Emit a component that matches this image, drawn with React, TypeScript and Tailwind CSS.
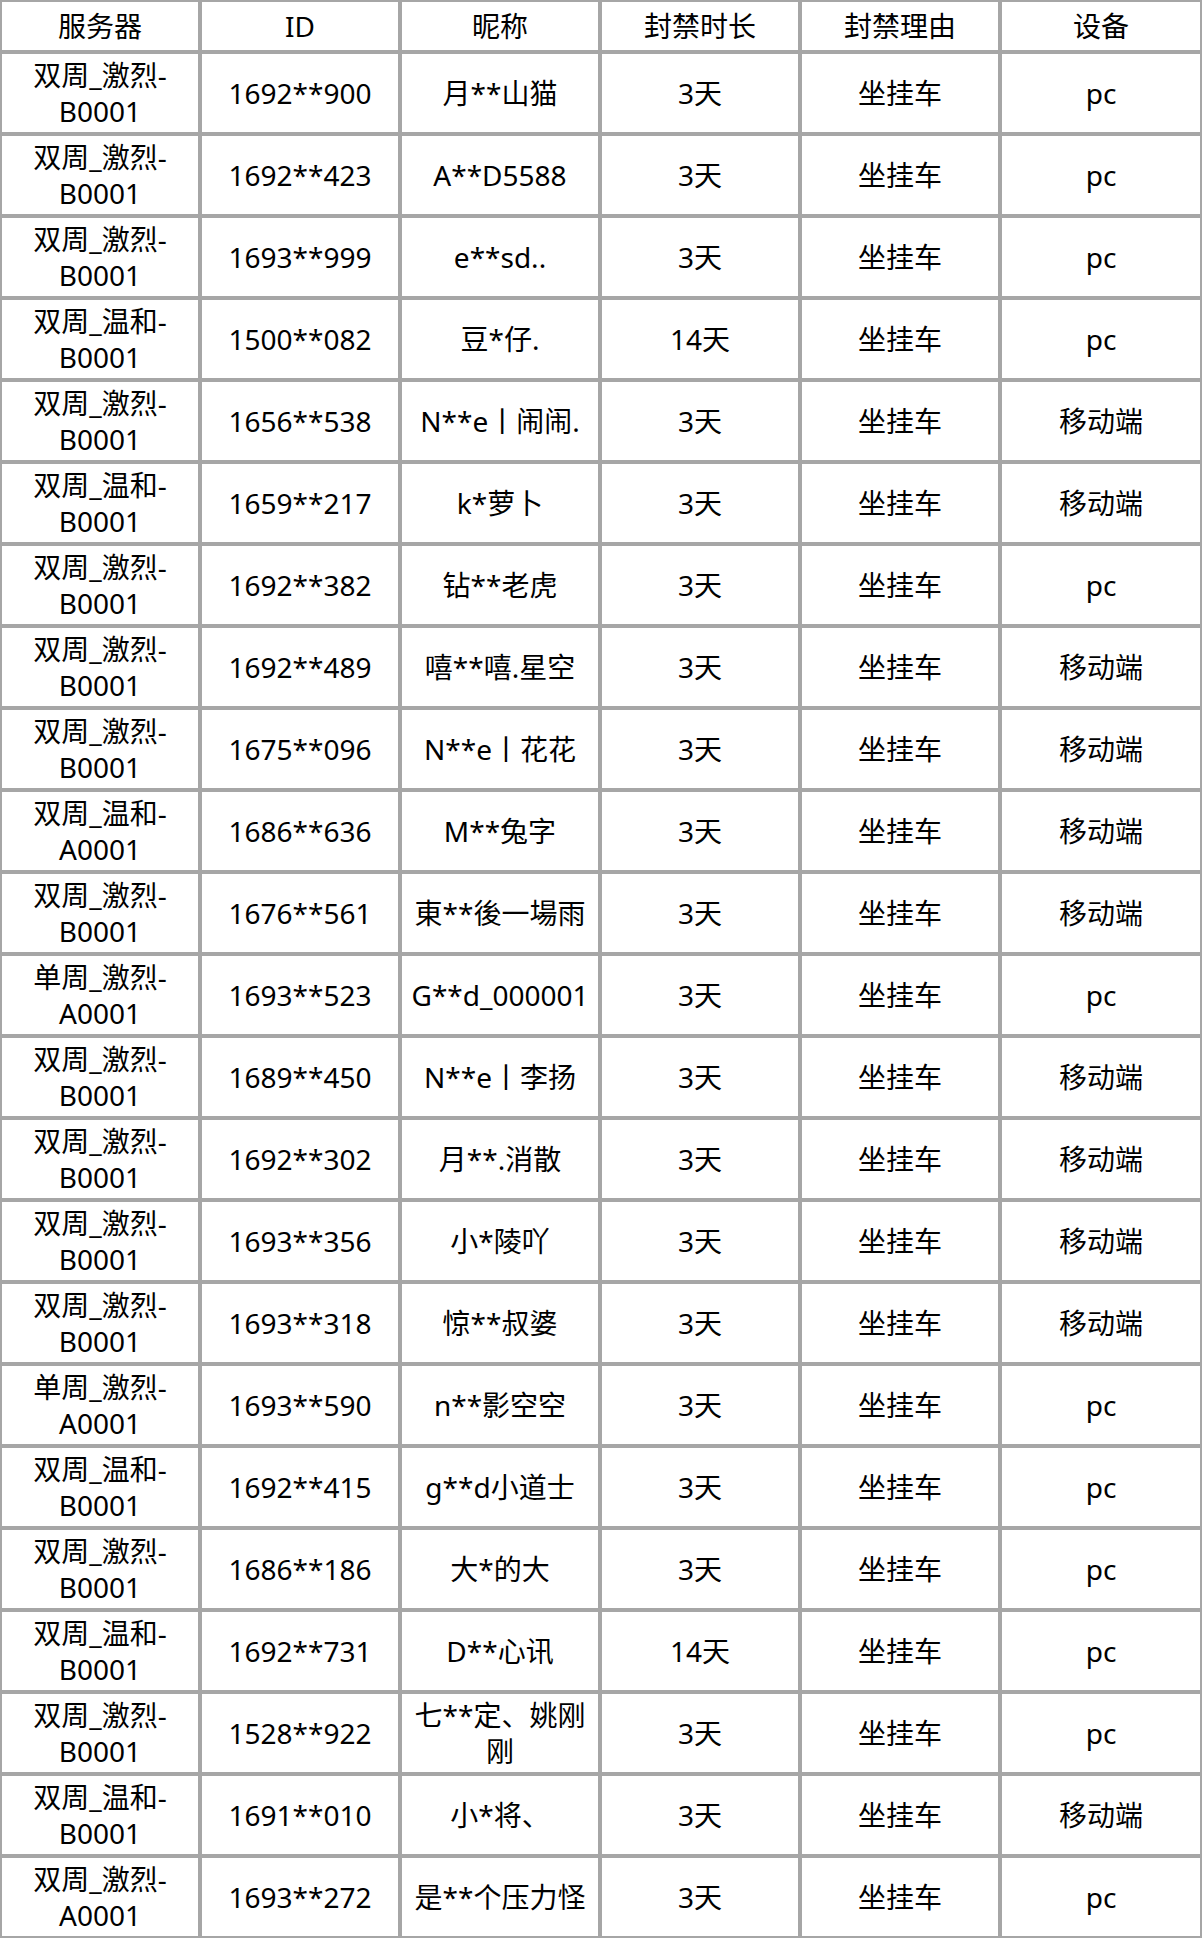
const headers = ['服务器', 'ID', '昵称', '封禁时长', '封禁理由', '设备']

// server, id, nickname, duration, device
const rows: [string, string, string, string, string][] = [
  ['双周_激烈-\nB0001', '1692**900', '月**山猫', '3天', 'pc'],
  ['双周_激烈-\nB0001', '1692**423', 'A**D5588', '3天', 'pc'],
  ['双周_激烈-\nB0001', '1693**999', 'e**sd..', '3天', 'pc'],
  ['双周_温和-\nB0001', '1500**082', '豆*仔.', '14天', 'pc'],
  ['双周_激烈-\nB0001', '1656**538', 'N**e丨闹闹.', '3天', '移动端'],
  ['双周_温和-\nB0001', '1659**217', 'k*萝卜', '3天', '移动端'],
  ['双周_激烈-\nB0001', '1692**382', '钻**老虎', '3天', 'pc'],
  ['双周_激烈-\nB0001', '1692**489', '嘻**嘻.星空', '3天', '移动端'],
  ['双周_激烈-\nB0001', '1675**096', 'N**e丨花花', '3天', '移动端'],
  ['双周_温和-\nA0001', '1686**636', 'M**兔字', '3天', '移动端'],
  ['双周_激烈-\nB0001', '1676**561', '東**後一場雨', '3天', '移动端'],
  ['单周_激烈-\nA0001', '1693**523', 'G**d_000001', '3天', 'pc'],
  ['双周_激烈-\nB0001', '1689**450', 'N**e丨李扬', '3天', '移动端'],
  ['双周_激烈-\nB0001', '1692**302', '月**.消散', '3天', '移动端'],
  ['双周_激烈-\nB0001', '1693**356', '小*陵吖', '3天', '移动端'],
  ['双周_激烈-\nB0001', '1693**318', '惊**叔婆', '3天', '移动端'],
  ['单周_激烈-\nA0001', '1693**590', 'n**影空空', '3天', 'pc'],
  ['双周_温和-\nB0001', '1692**415', 'g**d小道士', '3天', 'pc'],
  ['双周_激烈-\nB0001', '1686**186', '大*的大', '3天', 'pc'],
  ['双周_温和-\nB0001', '1692**731', 'D**心讯', '14天', 'pc'],
  ['双周_激烈-\nB0001', '1528**922', '七**定、姚刚\n刚', '3天', 'pc'],
  ['双周_温和-\nB0001', '1691**010', '小*将、', '3天', '移动端'],
  ['双周_激烈-\nA0001', '1693**272', '是**个压力怪', '3天', 'pc'],
]

const cell =
  'border-2 border-[#a6a6a6] text-center align-middle whitespace-pre p-0 leading-[36px]'

export default function App() {
  return (
    <div className="w-[1202px] bg-white text-black font-['Noto_Sans','Noto_Sans_CJK_SC',sans-serif] text-[28px]">
      <table className="w-[1202px] table-fixed border-separate border-spacing-0">
        <colgroup>
          <col className="w-[200px]" />
          <col className="w-[200px]" />
          <col className="w-[200px]" />
          <col className="w-[200px]" />
          <col className="w-[200px]" />
          <col className="w-[202px]" />
        </colgroup>
        <thead>
          <tr>
            {headers.map((h) => (
              <th key={h} className={`${cell} h-[52px] font-normal`}>
                {h}
              </th>
            ))}
          </tr>
        </thead>
        <tbody>
          {rows.map((r, i) => (
            <tr key={i}>
              <td className={`${cell} h-[82px]`}>{r[0]}</td>
              <td className={`${cell} h-[82px]`}>{r[1]}</td>
              <td className={`${cell} h-[82px]`}>{r[2]}</td>
              <td className={`${cell} h-[82px]`}>{r[3]}</td>
              <td className={`${cell} h-[82px]`}>坐挂车</td>
              <td className={`${cell} h-[82px]`}>{r[4]}</td>
            </tr>
          ))}
        </tbody>
      </table>
    </div>
  )
}
